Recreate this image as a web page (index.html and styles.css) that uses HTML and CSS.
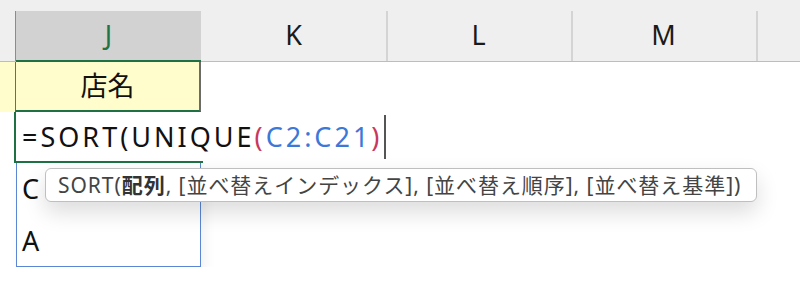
FILE: index.html
```html
<!DOCTYPE html>
<html lang="ja">
<head>
  <meta charset="UTF-8">
  <title>SORT UNIQUE</title>
  <link rel="stylesheet" href="styles.css">
</head>
<body>
  <div class="sheet">
    <div class="colhead edge"></div>
    <div class="colhead active">J</div>
    <div class="colhead after-active">K</div>
    <div class="colhead">L</div>
    <div class="colhead">M</div>
    <div class="colhead"></div>

    <div class="cell yellow"></div>
    <div class="cell yellow title">店名</div>
    <div class="cell filler"></div>

    <div class="cell"></div>
    <div class="cell editing">
      <span class="formula">=SORT(UNIQUE<span class="paren">(</span><span class="ref">C2:C21</span><span class="paren">)</span></span><span class="caret"></span>
    </div>
    <div class="cell filler"></div>

    <div class="cell tall"></div>
    <div class="cell spill">
      <div class="value">C</div>
      <div class="value">A</div>
    </div>
    <div class="cell filler tall"></div>
  </div>

  <div class="tip">SORT(<b>配列</b>, [並べ替えインデックス], [並べ替え順序], [並べ替え基準])</div>
</body>
</html>
```

FILE: styles.css
```css
body {
  margin: 0;
  background: #fff;
  font-family: "Noto Sans", "Noto Sans CJK JP", sans-serif;
  color: #111;
}

.sheet {
  display: grid;
  grid-template-columns: 16px 185px 185px 185px 185px 1fr;
  grid-template-rows: 62px 50px 51px 104px;
}

/* column headers: plain grey strip on top, separators start 11px down */
.colhead {
  padding-top: 11px;
  background-color: #efefef;
  background-image: linear-gradient(to right, #d4d4d4 2px, transparent 2px);
  background-position: 0 11px;
  background-repeat: no-repeat;
  border-bottom: 1px solid #bdbdbd;
  font-size: 27px;
  line-height: 48px;
  text-align: center;
  color: #1a1a1a;
}

.colhead.edge {
  background-image: linear-gradient(to left, #8c8c8c 1px, transparent 1px);
}

.colhead.active {
  background-image: linear-gradient(#d2d2d2, #d2d2d2);
  color: #217346;
  border-bottom: 2px solid #1e7145;
  line-height: 47px;
}

.colhead.after-active {
  background-image: none;
}

.cell {
  position: relative;
}

.yellow {
  background: #fffdcb;
}

.title {
  border-left: 1px solid #6b6b6b;
  border-right: 2px solid #6b6b6b;
  border-bottom: 2px solid #1e7145;
  margin-left: -1px;
  font-size: 27px;
  line-height: 48px;
  text-align: center;
}

.filler {
  grid-column: 3 / 7;
}

.editing {
  border-left: 2px solid #1e7145;
  border-bottom: 2px solid #1e7145;
  margin-left: -2px;
  margin-right: -2px;
  white-space: nowrap;
  z-index: 2;
}

.formula {
  display: inline-block;
  padding-left: 6px;
  font-size: 27px;
  line-height: 49px;
  letter-spacing: 3px;
}

.paren {
  color: #c8385e;
}

.ref {
  color: #3c78d8;
}

.caret {
  position: absolute;
  top: 3px;
  left: 368px;
  width: 2px;
  height: 44px;
  background: #555;
}

.tall {
  grid-row: 4;
}

.spill {
  grid-row: 4;
  grid-column: 2;
  border: 1px solid #5a86d3;
  border-top: none;
  box-shadow: 4px 6px 12px rgba(0, 0, 0, 0.06);
}

.value {
  height: 52px;
  padding-left: 5px;
  font-size: 27px;
  line-height: 52px;
}

.tip {
  position: absolute;
  left: 45px;
  top: 168px;
  width: 698px;
  height: 32px;
  padding-left: 12px;
  border: 1px solid #bfbfbf;
  border-radius: 6px;
  background: #fff;
  box-shadow: 0 10px 22px rgba(0, 0, 0, 0.14);
  color: #444;
  font-size: 21px;
  line-height: 32px;
  letter-spacing: 0.95px;
  white-space: nowrap;
  z-index: 3;
}

.tip b {
  color: #333;
}
```
